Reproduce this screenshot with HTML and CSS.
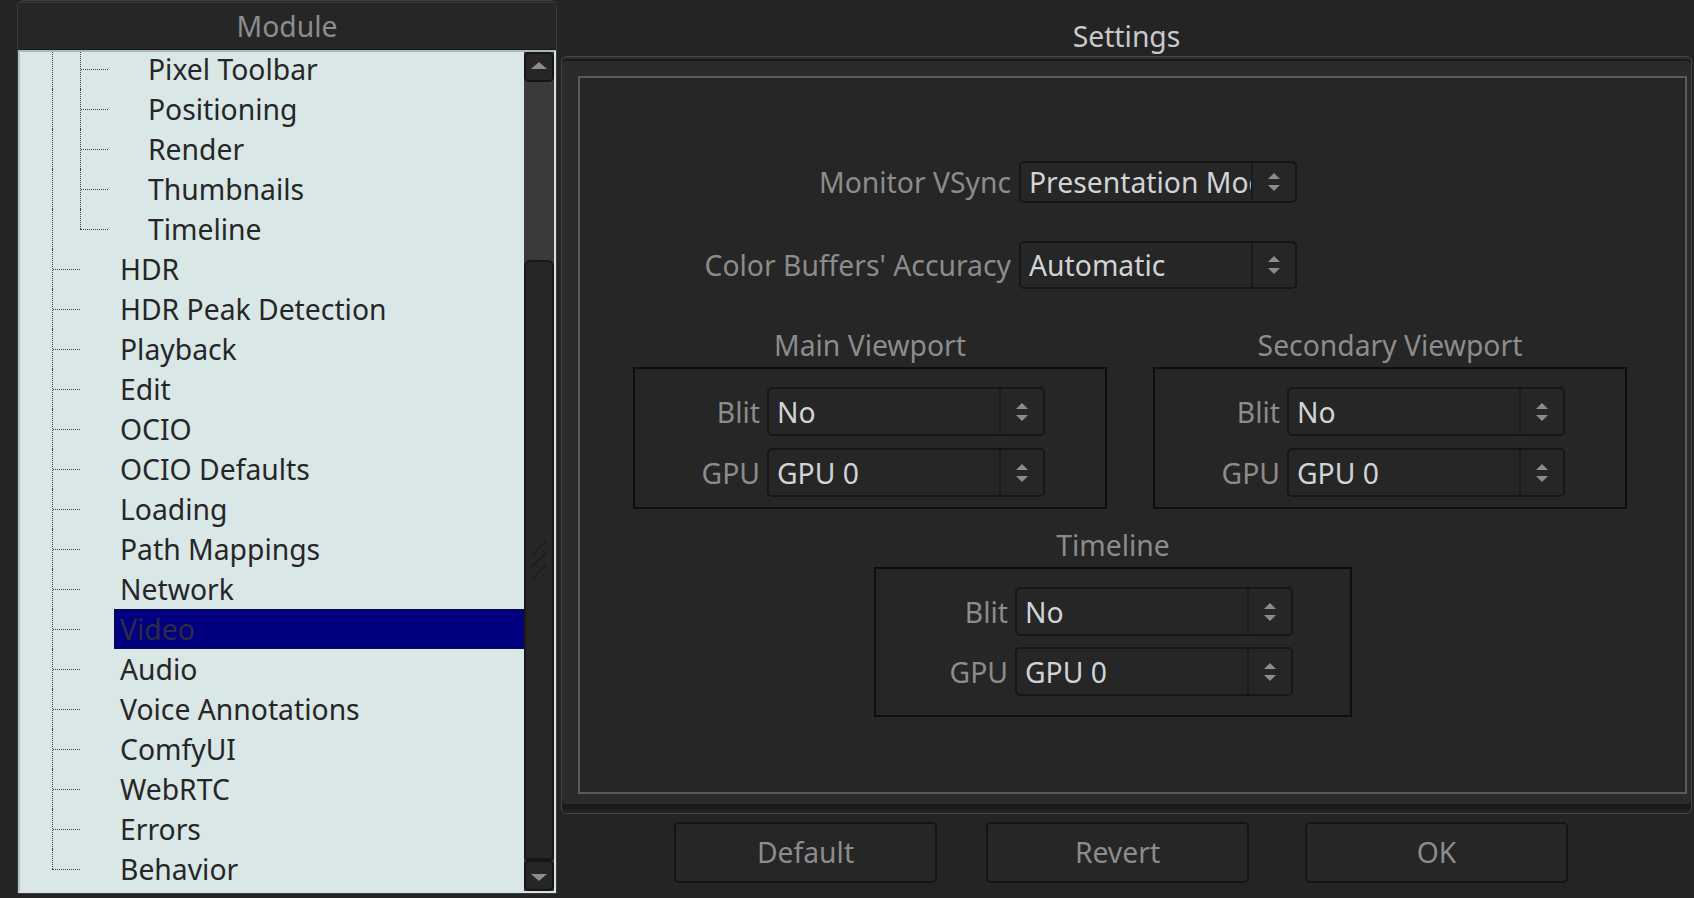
FILE: index.html
```html
<!DOCTYPE html>
<html>
<head>
  <title>Preferences</title>
  <link rel="stylesheet" href="styles.css">
</head>
<body>
  <div class="dialog">
    <!-- left: module tree -->
    <div class="module">
      <div class="module-head">Module</div>
      <div class="tree-frame">
        <div class="rows">
          <div class="row"><span class="g v"></span><span class="g t"></span><span class="label">Pixel Toolbar</span></div>
          <div class="row"><span class="g v"></span><span class="g t"></span><span class="label">Positioning</span></div>
          <div class="row"><span class="g v"></span><span class="g t"></span><span class="label">Render</span></div>
          <div class="row"><span class="g v"></span><span class="g t"></span><span class="label">Thumbnails</span></div>
          <div class="row"><span class="g v"></span><span class="g e"></span><span class="label">Timeline</span></div>
          <div class="row"><span class="g t"></span><span class="label">HDR</span></div>
          <div class="row"><span class="g t"></span><span class="label">HDR Peak Detection</span></div>
          <div class="row"><span class="g t"></span><span class="label">Playback</span></div>
          <div class="row"><span class="g t"></span><span class="label">Edit</span></div>
          <div class="row"><span class="g t"></span><span class="label">OCIO</span></div>
          <div class="row"><span class="g t"></span><span class="label">OCIO Defaults</span></div>
          <div class="row"><span class="g t"></span><span class="label">Loading</span></div>
          <div class="row"><span class="g t"></span><span class="label">Path Mappings</span></div>
          <div class="row"><span class="g t"></span><span class="label">Network</span></div>
          <div class="row"><span class="g t"></span><span class="label selected">Video</span></div>
          <div class="row"><span class="g t"></span><span class="label">Audio</span></div>
          <div class="row"><span class="g t"></span><span class="label">Voice Annotations</span></div>
          <div class="row"><span class="g t"></span><span class="label">ComfyUI</span></div>
          <div class="row"><span class="g t"></span><span class="label">WebRTC</span></div>
          <div class="row"><span class="g t"></span><span class="label">Errors</span></div>
          <div class="row"><span class="g e"></span><span class="label">Behavior</span></div>
        </div>
        <div class="scrollbar">
          <div class="sb-btn sb-up"></div>
          <div class="sb-gap"></div>
          <div class="sb-handle">
            <svg width="16" height="40" viewBox="0 0 16 40">
              <path d="M1 15 L15 1 M1 27 L15 13 M1 39 L15 25" stroke="#1a1a1a" stroke-width="1.5" fill="none"/>
            </svg>
          </div>
          <div class="sb-btn sb-down"></div>
        </div>
      </div>
    </div>

    <!-- right: settings -->
    <div class="settings">
      <div class="settings-title">Settings</div>
      <div class="group">
        <div class="group-body">
          <div class="form-top">
            <span class="label-r">Monitor VSync</span>
            <div class="combo short"><span class="combo-text">Presentation Mode</span><span class="combo-arrows"><i class="up"></i><i class="down"></i></span></div>
            <span class="label-r">Color Buffers' Accuracy</span>
            <div class="combo"><span class="combo-text">Automatic</span><span class="combo-arrows"><i class="up"></i><i class="down"></i></span></div>
          </div>

          <div class="viewports">
            <div class="vp">
              <div class="vp-title">Main Viewport</div>
              <div class="vp-box">
                <span class="label-r">Blit</span>
                <div class="combo"><span class="combo-text">No</span><span class="combo-arrows"><i class="up"></i><i class="down"></i></span></div>
                <span class="label-r">GPU</span>
                <div class="combo"><span class="combo-text">GPU 0</span><span class="combo-arrows"><i class="up"></i><i class="down"></i></span></div>
              </div>
            </div>
            <div class="vp">
              <div class="vp-title">Secondary Viewport</div>
              <div class="vp-box">
                <span class="label-r">Blit</span>
                <div class="combo"><span class="combo-text">No</span><span class="combo-arrows"><i class="up"></i><i class="down"></i></span></div>
                <span class="label-r">GPU</span>
                <div class="combo"><span class="combo-text">GPU 0</span><span class="combo-arrows"><i class="up"></i><i class="down"></i></span></div>
              </div>
            </div>
          </div>

          <div class="vp timeline">
            <div class="vp-title">Timeline</div>
            <div class="vp-box">
              <span class="label-r">Blit</span>
              <div class="combo"><span class="combo-text">No</span><span class="combo-arrows"><i class="up"></i><i class="down"></i></span></div>
              <span class="label-r">GPU</span>
              <div class="combo"><span class="combo-text">GPU 0</span><span class="combo-arrows"><i class="up"></i><i class="down"></i></span></div>
            </div>
          </div>
        </div>
      </div>
      <div class="buttons">
        <div class="btn">Default</div>
        <div class="btn">Revert</div>
        <div class="btn ok">OK</div>
      </div>
    </div>
  </div>
</body>
</html>
```

FILE: styles.css
```css
* { box-sizing: border-box; }
body { margin: 0; background: #242424; font-family: "Noto Sans", "DejaVu Sans", sans-serif; font-size: 28.3px; color: #8c8c8c; }
.dialog { display: flex; height: 898px; padding: 0 2px 0 17px; }

/* module tree */
.module { width: 540px; height: 894px; display: flex; flex-direction: column; border: 1px solid #3b3b3b; border-radius: 6px 6px 0 0; background: #2b2b2b; }
.module-head { height: 48px; margin-top: 1px; line-height: 46px; text-align: center; background: #262626; border-top: 1px solid #363636; border-bottom: 1px solid #1b1b1b; }
.tree-frame { flex: 1; display: flex; overflow: hidden; background: #d9e7e7; border: 2px solid; border-color: #a9b9b9 #d4e2e2 #d4e2e2 #b3c3c3; }
.rows { flex: 1; margin-top: -3px; color: #262626; }
.row { display: flex; height: 40px; padding-left: 32px; }
.g { width: 28px; height: 40px; flex: none; }
.g.v, .g.t { border-left: 1px dotted #3e3e3e; }
.g.t::after { content: ""; display: block; margin-top: 20px; border-top: 1px dotted #3e3e3e; }
.g.e::before { content: ""; display: block; height: 20px; border-left: 1px dotted #3e3e3e; }
.g.e::after { content: ""; display: block; border-top: 1px dotted #3e3e3e; }
.label { flex: 1; margin-left: 34px; padding-left: 5px; line-height: 38px; border: 1px solid transparent; white-space: nowrap; }
.label.selected { background: #000080; border-color: #0c0c48; border-top-color: #08083a; color: #2c2c44; }

.scrollbar { width: 30px; flex: none; display: flex; flex-direction: column; background: #3a3a3a; }
.sb-btn { height: 30px; flex: none; background: #262626; border: 2px solid #151515; border-radius: 5px; display: flex; align-items: center; justify-content: center; }
.sb-up::before { content: ""; border: 8px solid transparent; border-top: 0; border-bottom: 7px solid #8c8c8c; margin-top: -3px; }
.sb-down { height: 31px; }
.sb-down::before { content: ""; border: 8px solid transparent; border-bottom: 0; border-top: 7px solid #8c8c8c; margin-top: 3px; }
.sb-gap { height: 178px; flex: none; }
.sb-handle { flex: 1; background: #262626; border: 2px solid #181818; border-radius: 6px 6px 2px 2px; display: flex; align-items: center; justify-content: center; }

/* settings */
.settings { flex: 1; margin-left: 4px; display: flex; flex-direction: column; }
.settings-title { height: 56px; padding-top: 16px; line-height: 40px; text-align: center; color: #c9c9c9; }
.group { height: 758px; display: flex; padding: 19px 4px 19px 16px; background: #2b2b2b; border: 1px solid #444; border-radius: 5px;
  box-shadow: inset 0 2px 0 #2f2f2f, inset 0 4px 0 #1a1a1a, inset 0 -4px 0 #222, inset 0 -9px 0 #1a1a1a; }
.group-body { flex: 1; border: 2px solid #5a5a5a; background: #262626; }

.label-r { text-align: right; white-space: nowrap; }
.form-top { display: grid; grid-template-columns: 431px 278px; column-gap: 8px; row-gap: 38px; margin-top: 83px; align-items: center; }

.combo { height: 48px; display: flex; align-items: center; background: #262626; border: 2px solid #161616; border-radius: 5px; }
.combo.short { height: 42px; }
.combo-text { flex: 1; min-width: 0; overflow: hidden; white-space: nowrap; padding-left: 8px; line-height: 40px; color: #d0d4d6; }
.combo-arrows { width: 44px; flex: none; align-self: stretch; border-left: 2px solid #1b1b1b; display: flex; flex-direction: column; align-items: center; justify-content: center; gap: 6px; }
.combo-arrows i { display: block; width: 0; height: 0; border-left: 6px solid transparent; border-right: 6px solid transparent; }
.combo-arrows .up { border-bottom: 6px solid #8c8c8c; }
.combo-arrows .down { border-top: 6px solid #8c8c8c; }

.viewports { display: flex; gap: 46px; padding-left: 53px; margin-top: 36px; }
.vp { width: 474px; }
.vp-title { line-height: 40px; text-align: center; margin-bottom: 2px; }
.vp-box { height: 142px; border: 2px solid #0e0e0e; padding: 18px 0 0 5px; display: grid; grid-template-columns: 120px 278px; column-gap: 7px; row-gap: 12px; align-content: start; align-items: center; }
.vp-box .combo { height: 49px; }
.timeline { width: 478px; margin: 16px 0 0 294px; }
.timeline .vp-box { height: 150px; padding-left: 12px; row-gap: 11px; }

.buttons { display: flex; margin-top: 8px; padding-left: 113px; }
.btn { width: 263px; height: 61px; line-height: 57px; text-align: center; background: #262626; border: 2px solid #151515; border-radius: 5px; }
.btn + .btn { margin-left: 49px; }
.btn.ok { margin-left: 56px; }
```
